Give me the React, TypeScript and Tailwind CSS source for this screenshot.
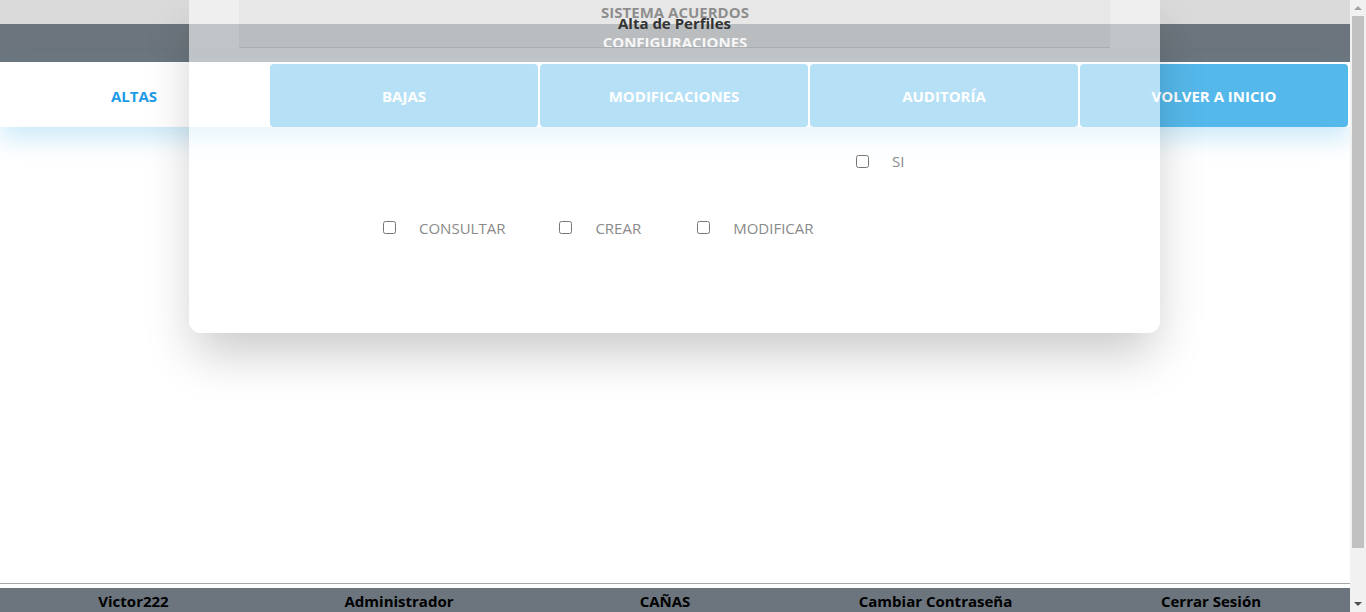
import React from 'react';

const TABS = ['ALTAS', 'BAJAS', 'MODIFICACIONES', 'AUDITORÍA', 'VOLVER A INICIO'];
const FOOTER = ['Victor222', 'Administrador', 'CAÑAS', 'Cambiar Contraseña', 'Cerrar Sesión'];

function Check({ label, className = '' }: { label: string; className?: string }) {
  return (
    <label className={`flex items-center gap-[23px] ${className}`}>
      <input type="checkbox" className="w-[13px] h-[13px] m-0 accent-gray-500" />
      <span className="text-[15px] text-[#8a8a8a]">{label}</span>
    </label>
  );
}

function Scrollbar() {
  return (
    <div className="w-4 h-[612px] bg-[#f1f1f1] flex flex-col items-center shrink-0">
      <div className="h-[16px] flex items-center justify-center">
        <div className="w-0 h-0 border-x-[4px] border-x-transparent border-b-[4px] border-b-[#a3a3a3]" />
      </div>
      <div className="w-[12px] h-[532px] bg-[#c1c1c1]" />
      <div className="flex-1" />
      <div className="h-[16px] flex items-center justify-center">
        <div className="w-0 h-0 border-x-[4px] border-x-transparent border-t-[4px] border-t-[#505050]" />
      </div>
    </div>
  );
}

export default function App() {
  return (
    <div className="flex items-start bg-white" style={{ fontFamily: '"Open Sans", "Noto Sans", sans-serif' }}>
      <div className="relative w-[1350px] min-h-[667px] bg-white flex flex-col">
        {/* Header */}
        <div className="h-6 bg-[#dadada] flex items-center justify-center">
          <span className="text-[15px] font-bold text-black">SISTEMA ACUERDOS</span>
        </div>
        <div className="h-[38px] bg-[#6c757d] flex items-end justify-center pb-[9px]">
          <span className="text-[15px] font-bold text-white">CONFIGURACIONES</span>
        </div>

        {/* Tabs */}
        <div className="grid grid-cols-5 gap-[2px] pt-[2px] pr-[2px] shadow-[0_12px_24px_rgba(85,184,234,0.3)]">
          {TABS.map((t, i) => (
            <div
              key={t}
              className={`h-[63px] rounded-[4px] flex items-center justify-center pt-[1px] text-[15px] font-bold ${
                i === 0 ? 'bg-white text-[#1e9be6]' : 'bg-[#55b8ea] text-white'
              }`}
            >
              {t}
            </div>
          ))}
        </div>

        <div className="flex-1" />

        {/* Footer */}
        <div className="border-t border-[#a8a8a8] pt-1">
          <div className="h-[79px] bg-[#6c757d] grid grid-cols-[267px_264px_268px_273px_278px]">
            {FOOTER.map((f) => (
              <div key={f} className="text-center text-[15px] font-bold text-black leading-[26px]">
                {f}
              </div>
            ))}
          </div>
        </div>

        {/* Overlay card */}
        <div className="absolute left-[189px] top-0 w-[971px] h-[333px] bg-white/[0.57] rounded-b-xl shadow-[0_25px_50px_-6px_rgba(0,0,0,0.22)] px-[50px] flex flex-col">
          <div className="h-[48px] border-b border-[#a9adb1] bg-black/[0.03] flex justify-center pt-[13px]">
            <span className="text-[15px] font-bold text-[#333] leading-[20px]">Alta de Perfiles</span>
          </div>
          <div className="flex pl-[617px] mt-[102px]">
            <Check label="SI" />
          </div>
          <div className="flex pl-[144px] mt-[44px]">
            <Check label="CONSULTAR" />
            <Check label="CREAR" className="ml-[54px]" />
            <Check label="MODIFICAR" className="ml-[56px]" />
          </div>
        </div>
      </div>
      <div className="sticky top-0">
        <Scrollbar />
      </div>
    </div>
  );
}
